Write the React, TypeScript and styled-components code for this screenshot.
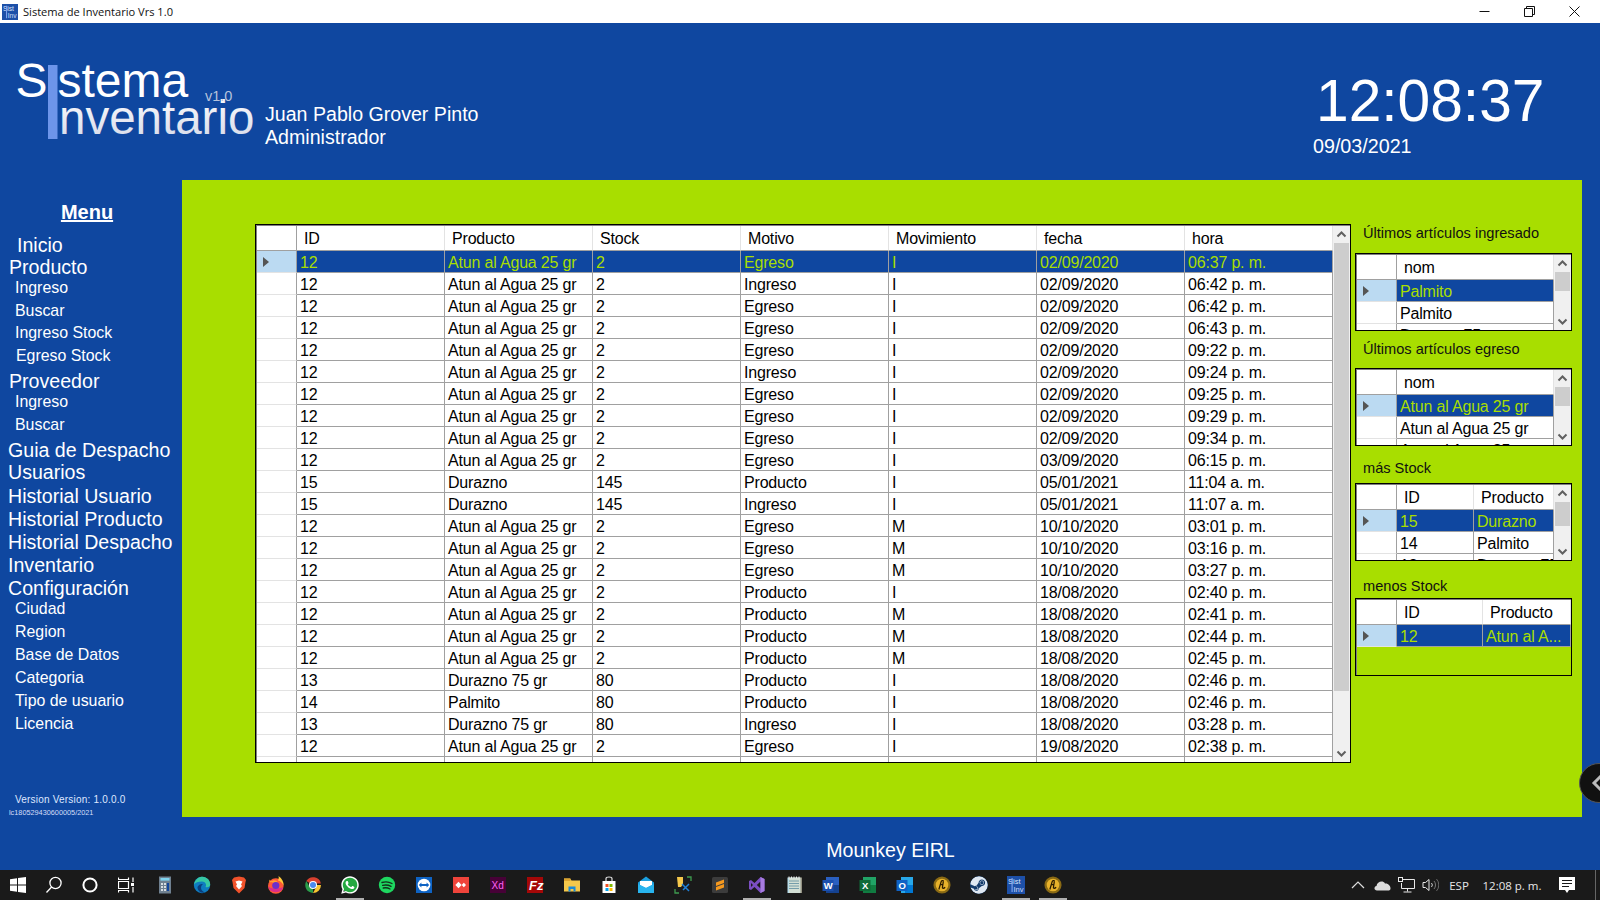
import React from "react";
import styled, { createGlobalStyle } from "styled-components";
import { FaWhatsapp, FaSteam } from "react-icons/fa";

const BLUE = "#0f47a0";
const GREEN = "#a8de00";
const ARIAL = `"Liberation Sans", Arial, sans-serif`;
const UI = `"Open Sans", "Noto Sans", sans-serif`;

const Global = createGlobalStyle`
  html, body { margin: 0; padding: 0; width: 1600px; height: 900px; overflow: hidden; background: ${BLUE}; }
  #root { width: 1600px; height: 900px; }
  * { box-sizing: border-box; }
`;

const Screen = styled.div`
  position: relative;
  width: 1600px;
  height: 900px;
  display: flex;
  flex-direction: column;
  overflow: hidden;
  background: ${BLUE};
  font-family: ${ARIAL};
`;

/* ---------- title bar ---------- */
const TitleBar = styled.div`
  height: 23px;
  flex: none;
  background: #fff;
  display: flex;
  align-items: center;
  padding-left: 2px;
  padding-right: 3px;
`;
const TitleText = styled.span`
  margin-left: 5px;
  font-family: ${UI};
  font-size: 11.1px;
  color: #111;
`;
const WindowButtons = styled.div`
  margin-left: auto;
  display: flex;
`;
const WindowButton = styled.div`
  width: 45px;
  height: 23px;
  display: flex;
  align-items: center;
  justify-content: center;
`;

/* ---------- header ---------- */
const Header = styled.header`
  height: 157px;
  flex: none;
  display: flex;
  color: #fff;
`;
const LogoArt = styled.svg`
  width: 265px;
  height: 157px;
  flex: none;
  display: block;
`;
const UserBlock = styled.div`
  padding-top: 80px;
  font-size: 19.6px;
  line-height: 23px;
`;
const ClockBlock = styled.div`
  margin-left: auto;
  width: 287px;
  padding-top: 48px;
`;
const ClockTime = styled.div`
  margin-left: 3px;
  font-size: 58.7px;
  line-height: 60px;
`;
const ClockDate = styled.div`
  margin-top: 3px;
  font-size: 19.7px;
  line-height: 24px;
`;

/* ---------- body ---------- */
const Body = styled.div`
  height: 637px;
  flex: none;
  display: flex;
  position: relative;
`;
const Sidebar = styled.nav`
  width: 182px;
  flex: none;
  display: flex;
  flex-direction: column;
  color: #fff;
`;
const MenuTitle = styled.div`
  width: 174px;
  margin-top: 20px;
  height: 24px;
  line-height: 24px;
  text-align: center;
  font-size: 20px;
  font-weight: bold;
  text-decoration: underline;
`;
const MenuItem = styled.div<{ $sub?: boolean; $x: number; $gap: number }>`
  height: 22px;
  line-height: 22px;
  white-space: nowrap;
  padding-left: ${(p) => p.$x}px;
  margin-top: ${(p) => p.$gap}px;
  font-size: ${(p) => (p.$sub ? "15.9px" : "19.6px")};
`;
const VersionLine = styled.div`
  margin-top: auto;
  padding-left: 15px;
  font-size: 10px;
  letter-spacing: 0.2px;
  line-height: 12px;
  color: #dfe8ff;
`;
const LicenseLine = styled.div`
  padding: 2px 0 0 9px;
  margin-bottom: -1px;
  font-size: 7.3px;
  line-height: 10px;
  color: #d4ddf8;
`;

const Panel = styled.main`
  width: 1400px;
  flex: none;
  background: ${GREEN};
  padding: 44px 0 0 73px;
  display: flex;
  align-items: flex-start;
`;

/* ---------- data grids ---------- */
const Grid = styled.div<{ $w: number; $h: number; $transparent?: boolean }>`
  width: ${(p) => p.$w}px;
  height: ${(p) => p.$h}px;
  flex: none;
  display: flex;
  border: 1px solid #000;
  padding: 1px 0 0 1px;
  overflow: hidden;
  box-shadow: inset 1px 1px 0 #808080;
  background: ${(p) => (p.$transparent ? "transparent" : "#fff")};
`;
const GridBody = styled.div`
  flex: 1;
  min-width: 0;
  overflow: hidden;
`;
const Row = styled.div<{ $cols: string; $head?: boolean }>`
  display: grid;
  grid-template-columns: ${(p) => p.$cols};
  height: ${(p) => (p.$head ? "25px" : "22px")};
  font-size: 16px;
  letter-spacing: -0.18px;
  line-height: ${(p) => (p.$head ? "26px" : "23px")};
  color: #000;
`;
const RowHead = styled.div<{ $on?: boolean; $head?: boolean }>`
  background: ${(p) => (p.$on ? "#bbdaf2" : "#fff")};
  border-bottom: 1px solid ${(p) => (p.$head ? "#a0a0a0" : "#e3e3e3")};
  border-right: 1px solid #a0a0a0;
  display: flex;
  align-items: center;
  padding-left: 6px;
`;
const Arrow = styled.i`
  display: block;
  width: 0;
  height: 0;
  border-style: solid;
  border-width: 5px 0 5px 6px;
  border-color: transparent transparent transparent #555;
`;
const HeadCell = styled.div`
  background: #fff;
  border-bottom: 1px solid #a0a0a0;
  border-right: 1px solid #e3e3e3;
  padding-left: 7px;
  white-space: nowrap;
  overflow: hidden;
`;
const Cell = styled.div<{ $on?: boolean }>`
  background: ${(p) => (p.$on ? BLUE : "#fff")};
  color: ${(p) => (p.$on ? GREEN : "#000")};
  border-bottom: 1px solid #a0a0a0;
  border-right: 1px solid #a0a0a0;
  padding-left: 3px;
  white-space: nowrap;
  overflow: hidden;
`;
const ScrollBar = styled.div`
  width: 17px;
  flex: none;
  height: 100%;
  display: flex;
  flex-direction: column;
  background: #f0f0f0;
`;
const ScrollButton = styled.div`
  height: 17px;
  flex: none;
  display: flex;
  align-items: center;
  justify-content: center;
`;
const ScrollTrack = styled.div`
  flex: 1;
  padding: 0 1px;
`;
const ScrollThumb = styled.div<{ $h: number }>`
  height: ${(p) => p.$h}px;
  background: #cdcdcd;
`;

/* ---------- right column ---------- */
const SideColumn = styled.aside`
  margin-left: 4px;
  width: 217px;
  flex: none;
  display: flex;
  flex-direction: column;
`;
const SideLabel = styled.div<{ $h: number; $top: number }>`
  height: ${(p) => p.$h}px;
  margin-top: ${(p) => (p.$top < 0 ? p.$top : 0)}px;
  padding: ${(p) => Math.max(p.$top, 0)}px 0 0 8px;
  font-size: 14.6px;
  line-height: 20px;
  color: #111;
  white-space: nowrap;
`;

/* ---------- footer + taskbar ---------- */
const Footer = styled.footer`
  height: 53px;
  flex: none;
  padding: 22px 0 0 181px;
  text-align: center;
  color: #fff;
  font-size: 19.6px;
  line-height: 22px;
`;
const Taskbar = styled.div`
  height: 30px;
  flex: none;
  background: #1a1a1a;
  display: flex;
  align-items: center;
  color: #e8e8e8;
`;
const TaskButton = styled.div<{ $active?: boolean; $w: number }>`
  position: relative;
  width: ${(p) => p.$w}px;
  height: 30px;
  flex: none;
  display: flex;
  align-items: center;
  justify-content: center;
  &::after {
    content: "";
    display: ${(p) => (p.$active ? "block" : "none")};
    position: absolute;
    left: 4px;
    right: 5px;
    bottom: 0;
    height: 2px;
    background: #b0b0b0;
  }
`;
const WhatsappBadge = styled.span`
  width: 20px;
  height: 20px;
  display: flex;
  border-radius: 50%;
  background: radial-gradient(circle, #25a840 0 8px, transparent 8.2px);
`;
const SteamBadge = styled(FaSteam)`
  background: #123a6b;
  border-radius: 50%;
`;
const Tray = styled.div`
  margin-left: auto;
  display: flex;
  align-items: center;
  height: 30px;
`;
const TrayItem = styled.div<{ $w: number }>`
  width: ${(p) => p.$w}px;
  flex: none;
  display: flex;
  align-items: center;
  justify-content: center;
  font-family: ${UI};
  font-size: 11.5px;
  white-space: nowrap;
`;
const TrayDivider = styled.div`
  width: 1px;
  height: 30px;
  margin: 0 4px 0 9px;
  background: #666;
`;
const Handle = styled.div`
  position: absolute;
  left: 1579px;
  top: 583px;
  width: 40px;
  height: 40px;
  border-radius: 50%;
  background: #111;
  border: 1px solid #555;
  display: flex;
  align-items: center;
  padding-left: 11px;
`;

/* ---------- grid data ---------- */
const A = "Atun al Agua 25 gr";
const D7 = "Durazno 75 gr";
const mainRows: string[][] = [
  ["12", A, "2", "Egreso", "I", "02/09/2020", "06:37 p. m."],
  ["12", A, "2", "Ingreso", "I", "02/09/2020", "06:42 p. m."],
  ["12", A, "2", "Egreso", "I", "02/09/2020", "06:42 p. m."],
  ["12", A, "2", "Egreso", "I", "02/09/2020", "06:43 p. m."],
  ["12", A, "2", "Egreso", "I", "02/09/2020", "09:22 p. m."],
  ["12", A, "2", "Ingreso", "I", "02/09/2020", "09:24 p. m."],
  ["12", A, "2", "Egreso", "I", "02/09/2020", "09:25 p. m."],
  ["12", A, "2", "Egreso", "I", "02/09/2020", "09:29 p. m."],
  ["12", A, "2", "Egreso", "I", "02/09/2020", "09:34 p. m."],
  ["12", A, "2", "Egreso", "I", "03/09/2020", "06:15 p. m."],
  ["15", "Durazno", "145", "Producto", "I", "05/01/2021", "11:04 a. m."],
  ["15", "Durazno", "145", "Ingreso", "I", "05/01/2021", "11:07 a. m."],
  ["12", A, "2", "Egreso", "M", "10/10/2020", "03:01 p. m."],
  ["12", A, "2", "Egreso", "M", "10/10/2020", "03:16 p. m."],
  ["12", A, "2", "Egreso", "M", "10/10/2020", "03:27 p. m."],
  ["12", A, "2", "Producto", "I", "18/08/2020", "02:40 p. m."],
  ["12", A, "2", "Producto", "M", "18/08/2020", "02:41 p. m."],
  ["12", A, "2", "Producto", "M", "18/08/2020", "02:44 p. m."],
  ["12", A, "2", "Producto", "M", "18/08/2020", "02:45 p. m."],
  ["13", D7, "80", "Producto", "I", "18/08/2020", "02:46 p. m."],
  ["14", "Palmito", "80", "Producto", "I", "18/08/2020", "02:46 p. m."],
  ["13", D7, "80", "Ingreso", "I", "18/08/2020", "03:28 p. m."],
  ["12", A, "2", "Egreso", "I", "19/08/2020", "02:38 p. m."],
  ["12", A, "2", "Egreso", "I", "19/08/2020", "02:39 p. m."],
];

const Chevron = ({ down }: { down?: boolean }) => (
  <svg width="11" height="7" viewBox="0 0 11 7">
    <polyline
      points={down ? "1.5,1.5 5.5,5.5 9.5,1.5" : "1.5,5.5 5.5,1.5 9.5,5.5"}
      fill="none"
      stroke="#606060"
      strokeWidth="2"
    />
  </svg>
);

const DataGrid = ({
  w, h, cols, head, rows, thumb, transparent,
}: {
  w: number; h: number; cols: string; head: string[]; rows: string[][]; thumb?: number; transparent?: boolean;
}) => (
  <Grid $w={w} $h={h} $transparent={transparent}>
    <GridBody>
      <Row $cols={cols} $head>
        <RowHead $head />
        {head.map((t) => (
          <HeadCell key={t}>{t}</HeadCell>
        ))}
      </Row>
      {rows.map((r, i) => (
        <Row $cols={cols} key={i}>
          <RowHead $on={i === 0}>{i === 0 && <Arrow />}</RowHead>
          {r.map((c, j) => (
            <Cell $on={i === 0} key={j}>{c}</Cell>
          ))}
        </Row>
      ))}
    </GridBody>
    {thumb !== undefined && (
      <ScrollBar>
        <ScrollButton><Chevron /></ScrollButton>
        <ScrollTrack><ScrollThumb $h={thumb} /></ScrollTrack>
        <ScrollButton><Chevron down /></ScrollButton>
      </ScrollBar>
    )}
  </Grid>
);

/* ---------- menu ---------- */
const menu: { t: string; x: number; gap: number; sub?: boolean }[] = [
  { t: "Inicio", x: 17, gap: 10 },
  { t: "Producto", x: 9, gap: 0 },
  { t: "Ingreso", x: 15, gap: -1, sub: true },
  { t: "Buscar", x: 15, gap: 1, sub: true },
  { t: "Ingreso Stock", x: 15, gap: 0, sub: true },
  { t: "Egreso Stock", x: 16, gap: 1, sub: true },
  { t: "Proveedor", x: 9, gap: 3 },
  { t: "Ingreso", x: 15, gap: -1, sub: true },
  { t: "Buscar", x: 15, gap: 1, sub: true },
  { t: "Guia de Despacho", x: 8, gap: 3 },
  { t: "Usuarios", x: 8, gap: 0 },
  { t: "Historial Usuario", x: 8, gap: 2 },
  { t: "Historial Producto", x: 8, gap: 1 },
  { t: "Historial Despacho", x: 8, gap: 1 },
  { t: "Inventario", x: 8, gap: 1 },
  { t: "Configuración", x: 8, gap: 1 },
  { t: "Ciudad", x: 15, gap: -1, sub: true },
  { t: "Region", x: 15, gap: 1, sub: true },
  { t: "Base de Datos", x: 15, gap: 1, sub: true },
  { t: "Categoria", x: 15, gap: 1, sub: true },
  { t: "Tipo de usuario", x: 15, gap: 1, sub: true },
  { t: "Licencia", x: 15, gap: 1, sub: true },
];

/* ---------- icons ---------- */
const Ic = ({ children, s = 20 }: { children: React.ReactNode; s?: number }) => (
  <svg width={s} height={s} viewBox="0 0 20 20">{children}</svg>
);
const SistIcon = ({ s = 18 }: { s?: number }) => (
  <svg width={s} height={s} viewBox="0 0 18 18">
    <rect width="18" height="18" fill="#1d50a8" />
    <text x="1" y="8" fontSize="7.5" fontFamily={ARIAL} fill="#d9e4fb">Sist</text>
    <rect x="4.5" y="2" width="1.2" height="14" fill="#7da0ea" />
    <text x="6.5" y="16" fontSize="7.5" fontFamily={ARIAL} fill="#cfdcf8">Inv</text>
  </svg>
);
const FlIcon = () => (
  <Ic s={18}>
    <circle cx="10" cy="10" r="9.5" fill="#8a6a14" />
    <circle cx="10" cy="10" r="7" fill="#e8b22b" />
    <path d="M6.5 15 9 6.5C9.4 5 11 5 12 5.5M7.5 9.5H11M11.5 6 10.5 12.5C10.3 14 12 14 13.5 12.5" fill="none" stroke="#2a1b00" strokeWidth="1.4" />
  </Ic>
);

const taskIcons: { k: string; active?: boolean; el: React.ReactNode }[] = [
  { k: "win", el: <Ic><path fill="#fff" d="M2 4.3 9 3.3V9.5H2ZM10 3.1 18 2V9.5H10ZM2 10.5H9V16.7L2 15.7ZM10 10.5H18V18L10 16.9Z" /></Ic> },
  { k: "search", el: <Ic><circle cx="11.5" cy="8" r="5.6" fill="none" stroke="#fff" strokeWidth="1.3" /><path d="M7.6 12 2.5 17.5" stroke="#fff" strokeWidth="1.3" /></Ic> },
  { k: "cortana", el: <Ic><circle cx="9" cy="10" r="6.6" fill="none" stroke="#fff" strokeWidth="2" /></Ic> },
  { k: "tasks", el: <Ic><path d="M0.5 2.5V4.5H10.5V2.5M0.5 17.5V15.5H10.5V17.5M0.5 6.5H10.5V13.5H0.5Z M15 2.5V7 M15 12V17.5" fill="none" stroke="#fff" strokeWidth="1.2" /><rect x="13" y="8" width="3" height="3" fill="#fff" /></Ic> },
  { k: "calc", el: <Ic><rect x="4" y="1.5" width="12" height="17" fill="#6f8090" /><rect x="5.5" y="3" width="9" height="2.6" fill="#7fd3ee" /><path d="M6 8h2v2H6zM9 8h2v2H9zM6 11h2v2H6zM9 11h2v2H9zM6 14h2v2H6zM9 14h2v2H9z" fill="#d7dde2" /><rect x="12" y="8" width="2" height="8" fill="#12469c" /></Ic> },
  { k: "edge", el: <Ic><circle cx="10" cy="10" r="8.2" fill="#0f7cc0" /><path d="M2 9.5C3 3.5 8 1.8 10.5 1.8 15 1.8 18.2 5.5 18.2 9.5 18.2 12 15.8 12.5 13.5 12 15 10 13.5 6.5 10 6.5 6 6.5 3.5 7.5 2 9.5Z" fill="#36c7a4" /><path d="M5.5 13C6 17 10 18.5 13 17.5 11 17 9 15 9 13 9 10 11 9 11 9 8 9 5.5 10.5 5.5 13Z" fill="#0a3f7e" /></Ic> },
  { k: "brave", el: <Ic><path d="M5 2.5 10 1.5 15 2.5 17 5 16.5 7 15.5 13 10 18.5 4.5 13 3.5 7 3 5Z" fill="#f1522b" /><path d="M6.5 6.5 10 5.5 13.5 6.5 12 9.5 13 11 10 14.5 7 11 8 9.5Z" fill="#fff" /></Ic> },
  { k: "firefox", el: <Ic><circle cx="9.8" cy="11" r="7.8" fill="#ff5a36" /><path d="M2 11A8 8 0 0 0 17.6 11C17.6 13 12 13.5 8 13.5 5 13.5 3 12.5 2 11Z" fill="#d92d8a" /><path d="M12.5 1C16 3.5 18 7 17.6 11 16.8 7.5 14 6 12 5.5 12.8 4 13 2.5 12.5 1Z" fill="#ffc93a" /><path d="M5 7C3 8 3 6 3.5 4.5 4 6 5 6.5 7 5.5 8.5 5 11 6 12 7.5L8.5 8Z" fill="#ffa02e" /><circle cx="9.8" cy="10.5" r="3.6" fill="#6b2fc9" /></Ic> },
  { k: "chrome", el: <Ic><path d="M10 10 3.3 6A8 8 0 0 1 17.9 8.5H10Z" fill="#d8402f" /><path d="M10 10H18A8 8 0 0 1 10 18L13.5 11.5Z" fill="#f7c531" /><path d="M10 10 10 18A8 8 0 0 1 3.3 6L7 12.5Z" fill="#2a9d4a" /><circle cx="10" cy="10" r="4" fill="#fff" /><circle cx="10" cy="10" r="3" fill="#4a8af0" /></Ic> },
  { k: "whatsapp", active: true, el: <WhatsappBadge><FaWhatsapp size={20} color="#fff" /></WhatsappBadge> },
  { k: "spotify", el: <Ic><circle cx="10" cy="10" r="8.2" fill="#1ed760" /><path d="M5 7.5C8 6.6 12 6.8 15 8.5M5.7 10.4C8 9.8 11.5 10 14 11.4M6.3 13C8.5 12.6 11 12.8 13 14" fill="none" stroke="#12301c" strokeWidth="1.4" strokeLinecap="round" /></Ic> },
  { k: "teamviewer", el: <Ic><rect x="2" y="2" width="16" height="16" fill="#0e63c4" /><circle cx="10" cy="10" r="6.3" fill="#fff" /><path d="M4.8 10 7.4 7.6V9H12.6V7.6L15.2 10 12.6 12.4V11H7.4V12.4Z" fill="#0e63c4" /></Ic> },
  { k: "anydesk", el: <Ic><rect x="2" y="2" width="16" height="16" fill="#ef443b" /><path d="M7.5 6.8 10.7 10 7.5 13.2 4.3 10Z M12.8 7.8 15 10 12.8 12.2 10.7 10Z" fill="#fff" /></Ic> },
  { k: "xd", el: <Ic><rect x="2" y="2" width="16" height="16" fill="#470137" /><text x="3.5" y="14" fontSize="10" fontFamily={ARIAL} fill="#ff61f6">Xd</text></Ic> },
  { k: "fz", el: <Ic><rect x="2" y="2" width="16" height="16" fill="#a50808" /><text x="4" y="15" fontSize="13" fontWeight="bold" fontStyle="italic" fontFamily={ARIAL} fill="#fff">Fz</text></Ic> },
  { k: "explorer", el: <Ic><path d="M2 3.5H8L9.5 5.5H18V16.5H2Z" fill="#f5c84b" /><rect x="2" y="3.5" width="6.5" height="2.5" fill="#dca32e" /><path d="M6.5 11.5H13.5V16.5H11.5V14H8.5V16.5H6.5Z" fill="#1a8ad8" /></Ic> },
  { k: "store", el: <Ic><path d="M3.5 6H16.5V18H3.5Z" fill="#fff" /><path d="M7 6V3.5C7 1.5 13 1.5 13 3.5V6" fill="none" stroke="#ddd" strokeWidth="1.2" /><rect x="6.5" y="9" width="3" height="3" fill="#f25022" /><rect x="10.5" y="9" width="3" height="3" fill="#7fba00" /><rect x="6.5" y="13" width="3" height="3" fill="#00a4ef" /><rect x="10.5" y="13" width="3" height="3" fill="#ffb900" /></Ic> },
  { k: "mail", el: <Ic><path d="M2 7.5 10 1.5 18 7.5V18H2Z" fill="#1aa0e0" /><path d="M4 6H16V10L10 13 4 10Z" fill="#fff" /><path d="M2 9 10 13 18 9V18H2Z" fill="#28b4ee" /></Ic> },
  { k: "snip", el: <Ic><path d="M4 2H10V9L8 12H5Z" fill="#f5c84b" /><path d="M9 9 16 16M16 9 10 15" stroke="#1f7fd6" strokeWidth="1.5" /><path d="M2 14V18H6M14 2H18V6" fill="none" stroke="#3e9b4f" strokeWidth="1.3" /></Ic> },
  { k: "sublime", el: <Ic><rect x="2" y="2" width="16" height="16" rx="1.5" fill="#3c3c3c" /><path d="M14 4.5V8L6 11V7.5ZM14 9V12.5L6 15.5V12Z" fill="#f79a1e" /></Ic> },
  { k: "vs", active: true, el: <Ic><path d="M13.5 2 17.5 4V16L13.5 18 7.5 12 4 15 2 14V6L4 5 7.5 8ZM13.5 6.5 9.8 10 13.5 13.5ZM4 8V12L6 10Z" fill="#7b4ec2" /><path d="M13.5 2 17.5 4V16L13.5 18Z" fill="#a77be0" /></Ic> },
  { k: "notepad", el: <Ic><rect x="3.5" y="2.5" width="13" height="15.5" fill="#b6dbe8" /><rect x="5" y="2.5" width="13" height="15.5" fill="#e5e1c8" opacity=".6" /><path d="M5 6H15M5 8.5H15M5 11H15M5 13.5H15" stroke="#5c8ca0" strokeWidth=".8" /><path d="M5 1.5V3.5M7.5 1.5V3.5M10 1.5V3.5M12.5 1.5V3.5M15 1.5V3.5" stroke="#eee" /></Ic> },
  { k: "word", el: <Ic><rect x="5" y="2" width="13" height="16" fill="#2a5fc0" /><rect x="5" y="10" width="13" height="8" fill="#154290" /><rect x="1.5" y="5" width="11" height="11" fill="#1b4fae" /><text x="2.7" y="14" fontSize="9.5" fontWeight="bold" fontFamily={ARIAL} fill="#fff">W</text></Ic> },
  { k: "excel", el: <Ic><rect x="5" y="2" width="13" height="16" fill="#21a366" /><rect x="5" y="10" width="13" height="8" fill="#107c41" /><rect x="1.5" y="5" width="11" height="11" fill="#0e6b38" /><text x="4" y="14" fontSize="9.5" fontWeight="bold" fontFamily={ARIAL} fill="#fff">X</text></Ic> },
  { k: "outlook", el: <Ic><path d="M6 2H18V18H6Z" fill="#28a8ea" /><path d="M10 10H18V18H10Z" fill="#0078d4" /><rect x="1.5" y="5" width="11" height="11" fill="#0f62c5" /><text x="3.5" y="14" fontSize="9.5" fontWeight="bold" fontFamily={ARIAL} fill="#fff">O</text></Ic> },
  { k: "fl1", el: <FlIcon /> },
  { k: "steam", el: <SteamBadge size={18} color="#dfe8f2" /> },
  { k: "sist", active: true, el: <SistIcon /> },
  { k: "fl2", active: true, el: <FlIcon /> },
];

export default function App() {
  const mainCols = "40px repeat(7, 148px)";
  return (
    <Screen>
      <Global />
      <TitleBar>
        <SistIcon s={16} />
        <TitleText>Sistema de Inventario Vrs 1.0</TitleText>
        <WindowButtons>
          <WindowButton>
            <svg width="11" height="11" viewBox="0 0 11 11"><path d="M0.5 5.5H10.5" stroke="#111" /></svg>
          </WindowButton>
          <WindowButton>
            <svg width="11" height="11" viewBox="0 0 11 11">
              <path d="M0.5 2.5H8.5V10.5H0.5Z M2.5 2.5V0.5H10.5V8.5H8.5" fill="none" stroke="#111" />
            </svg>
          </WindowButton>
          <WindowButton>
            <svg width="11" height="11" viewBox="0 0 11 11"><path d="M0.5 0.5 10.5 10.5M10.5 0.5 0.5 10.5" stroke="#111" /></svg>
          </WindowButton>
        </WindowButtons>
      </TitleBar>

      <Header>
        <LogoArt viewBox="0 0 265 157">
          <defs>
            <linearGradient id="fade" x1="0" y1="0" x2="0" y2="1">
              <stop offset="0" stopColor="#ffffff" />
              <stop offset="1" stopColor="#d3d8e8" />
            </linearGradient>
          </defs>
          <text x="15.5" y="74" fontSize="48" fontFamily={ARIAL} fill="#fff">S</text>
          <rect x="48" y="42" width="9.5" height="74" fill="#6d95ea" />
          <text x="57.5" y="74" fontSize="48" fontFamily={ARIAL} fill="#fff">stema</text>
          <text x="59" y="111" fontSize="47.5" fontFamily={ARIAL} fill="url(#fade)">nventario</text>
          <text x="205" y="78" fontSize="14.5" fontFamily={ARIAL} fill="#b6c3dd">v1.0</text>
        </LogoArt>
        <UserBlock>
          <div>Juan Pablo Grover Pinto</div>
          <div>Administrador</div>
        </UserBlock>
        <ClockBlock>
          <ClockTime>12:08:37</ClockTime>
          <ClockDate>09/03/2021</ClockDate>
        </ClockBlock>
      </Header>

      <Body>
        <Sidebar>
          <MenuTitle>Menu</MenuTitle>
          {menu.map((m, i) => (
            <MenuItem key={i} $x={m.x} $gap={m.gap} $sub={m.sub}>{m.t}</MenuItem>
          ))}
          <VersionLine>Version Version: 1.0.0.0</VersionLine>
          <LicenseLine>lc180529430600005/2021</LicenseLine>
        </Sidebar>

        <Panel>
          <DataGrid
            w={1096}
            h={539}
            cols={mainCols}
            head={["ID", "Producto", "Stock", "Motivo", "Movimiento", "fecha", "hora"]}
            rows={mainRows}
            thumb={448}
          />
          <SideColumn>
            <SideLabel $h={30} $top={-1}>Últimos artículos ingresado</SideLabel>
            <DataGrid w={217} h={78} cols="40px 157px" head={["nom"]} rows={[["Palmito"], ["Palmito"], [D7]]} thumb={19} />
            <SideLabel $h={37} $top={8}>Últimos artículos egreso</SideLabel>
            <DataGrid w={217} h={78} cols="40px 157px" head={["nom"]} rows={[[A], [A], [A]]} thumb={19} />
            <SideLabel $h={37} $top={12}>más Stock</SideLabel>
            <DataGrid w={217} h={78} cols="40px 77px 80px" head={["ID", "Producto"]} rows={[["15", "Durazno"], ["14", "Palmito"], ["13", D7]]} thumb={24} />
            <SideLabel $h={37} $top={15}>menos Stock</SideLabel>
            <DataGrid w={217} h={78} cols="40px 86px 88px" head={["ID", "Producto"]} rows={[["12", "Atun al A..."]]} transparent />
          </SideColumn>
        </Panel>
        <Handle>
          <svg width="12" height="18" viewBox="0 0 12 18"><polyline points="10,2 3,9 10,16" fill="none" stroke="#bbb" strokeWidth="3" /></svg>
        </Handle>
      </Body>

      <Footer>Mounkey EIRL</Footer>

      <Taskbar>
        {taskIcons.map((t, i) => (
          <TaskButton key={t.k} $active={t.active} $w={i === 0 ? 35.5 : 37}>{t.el}</TaskButton>
        ))}
        <Tray>
          <TrayItem $w={24}>
            <svg width="14" height="8" viewBox="0 0 14 8"><polyline points="1,7 7,1 13,7" fill="none" stroke="#ddd" strokeWidth="1.2" /></svg>
          </TrayItem>
          <TrayItem $w={24}>
            <svg width="18" height="12" viewBox="0 0 18 12"><path d="M4 11.5C1 11.5.5 7.5 3.5 7 4 2.5 10 1 12 4.5 15 4 17.8 7 17.5 9.5 17.5 11 16.5 11.5 15 11.5Z" fill="#dcdcdc" /></svg>
          </TrayItem>
          <TrayItem $w={24}>
            <svg width="17" height="16" viewBox="0 0 17 16"><path d="M3.5 2.5H16.5V11.5H3.5V6 M9.5 11.5V14.5M5.5 15H13.5" fill="none" stroke="#e8e8e8" /><rect x="0.5" y="0.5" width="4" height="4" fill="#1a1a1a" stroke="#e8e8e8" /></svg>
          </TrayItem>
          <TrayItem $w={24}>
            <svg width="17" height="14" viewBox="0 0 17 14"><path d="M1 4.5H3.5L7 1.5V12.5L3.5 9.5H1Z" fill="none" stroke="#e8e8e8" /><path d="M9.5 5A3 3 0 0 1 9.5 9" fill="none" stroke="#ccc" /><path d="M12 3A6 6 0 0 1 12 11" fill="none" stroke="#777" /><path d="M14.5 1A9 9 0 0 1 14.5 13" fill="none" stroke="#666" /></svg>
          </TrayItem>
          <TrayItem $w={34}>ESP</TrayItem>
          <TrayItem $w={72}>12:08 p. m.</TrayItem>
          <TrayItem $w={38}>
            <svg width="16" height="17" viewBox="0 0 16 17"><path d="M0 0H16V13H10L8 16 6 13H0Z" fill="#fff" /><path d="M3 3.5H13M3 6.5H13M3 9.5H10" stroke="#1a1a1a" /></svg>
          </TrayItem>
          <TrayDivider />
        </Tray>
      </Taskbar>
    </Screen>
  );
}
